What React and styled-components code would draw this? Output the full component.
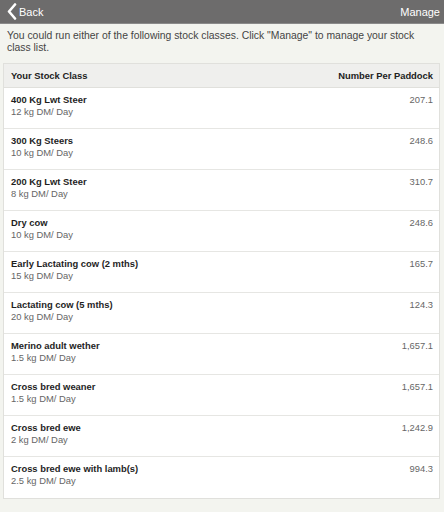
import React from 'react';
import styled, { createGlobalStyle } from 'styled-components';

const GlobalStyle = createGlobalStyle`
  html, body {
    margin: 0;
    padding: 0;
    background: #f3f4ef;
    font-family: "Liberation Sans", Arial, sans-serif;
  }
`;

const Page = styled.div`
  width: 444px;
  min-height: 512px;
  background: #f3f4ef;
`;

const Bar = styled.header`
  height: 23px;
  background: #6d6c6c;
  border-bottom: 1px solid #8a8a8a;
  display: flex;
  align-items: center;
  justify-content: space-between;
  padding: 0 4px 0 7px;
  color: #fff;
  font-size: 11px;
`;

const BarButton = styled.span`
  display: flex;
  align-items: center;
  gap: 2px;
  cursor: pointer;
`;

const Intro = styled.p`
  margin: 0;
  padding: 6px 6px 0 7px;
  font-size: 10.4px;
  line-height: 12px;
  color: #444;
`;

const Table = styled.div`
  margin: 9px 4px 0 3px;
  border: 1px solid #e0e0dc;
  background: #fff;
`;

const HeadRow = styled.div`
  height: 23px;
  display: flex;
  align-items: center;
  justify-content: space-between;
  padding: 0 6px 0 7px;
  background: #efefed;
  border-bottom: 1px solid #e0e0dc;
  font-size: 9.4px;
  font-weight: bold;
  color: #222;
`;

const Row = styled.div`
  height: 40px;
  display: flex;
  justify-content: space-between;
  padding: 0 6px 0 7px;
  border-bottom: 1px solid ${p => (p.last ? 'transparent' : '#e6e6e3')};
`;

const Info = styled.div`
  padding-top: 6px;
  display: flex;
  flex-direction: column;
`;

const Name = styled.span`
  font-size: 9.4px;
  line-height: 12px;
  font-weight: bold;
  color: #1e1e1e;
`;

const Rate = styled.span`
  font-size: 9.4px;
  line-height: 12px;
  color: #666;
`;

const Value = styled.span`
  padding-top: 6px;
  font-size: 9.4px;
  line-height: 12px;
  color: #666;
`;

const classes = [
  ['400 Kg Lwt Steer', '12 kg DM/ Day', '207.1'],
  ['300 Kg Steers', '10 kg DM/ Day', '248.6'],
  ['200 Kg Lwt Steer', '8 kg DM/ Day', '310.7'],
  ['Dry cow', '10 kg DM/ Day', '248.6'],
  ['Early Lactating cow (2 mths)', '15 kg DM/ Day', '165.7'],
  ['Lactating cow (5 mths)', '20 kg DM/ Day', '124.3'],
  ['Merino adult wether', '1.5 kg DM/ Day', '1,657.1'],
  ['Cross bred weaner', '1.5 kg DM/ Day', '1,657.1'],
  ['Cross bred ewe', '2 kg DM/ Day', '1,242.9'],
  ['Cross bred ewe with lamb(s)', '2.5 kg DM/ Day', '994.3'],
];

const App = () => (
  <Page>
    <GlobalStyle />
    <Bar>
      <BarButton>
        <svg width="10" height="17" viewBox="0 0 10 17">
          <path d="M8 1.5 L2 8.5 L8 15.5" fill="none" stroke="#fff" strokeWidth="2.6" strokeLinecap="round" strokeLinejoin="round" />
        </svg>
        Back
      </BarButton>
      <BarButton>Manage</BarButton>
    </Bar>
    <Intro>
      You could run either of the following stock classes. Click "Manage" to manage your stock class list.
    </Intro>
    <Table>
      <HeadRow>
        <span>Your Stock Class</span>
        <span>Number Per Paddock</span>
      </HeadRow>
      {classes.map(([name, rate, value], i) => (
        <Row key={name} last={i === classes.length - 1}>
          <Info>
            <Name>{name}</Name>
            <Rate>{rate}</Rate>
          </Info>
          <Value>{value}</Value>
        </Row>
      ))}
    </Table>
  </Page>
);

export default App;
